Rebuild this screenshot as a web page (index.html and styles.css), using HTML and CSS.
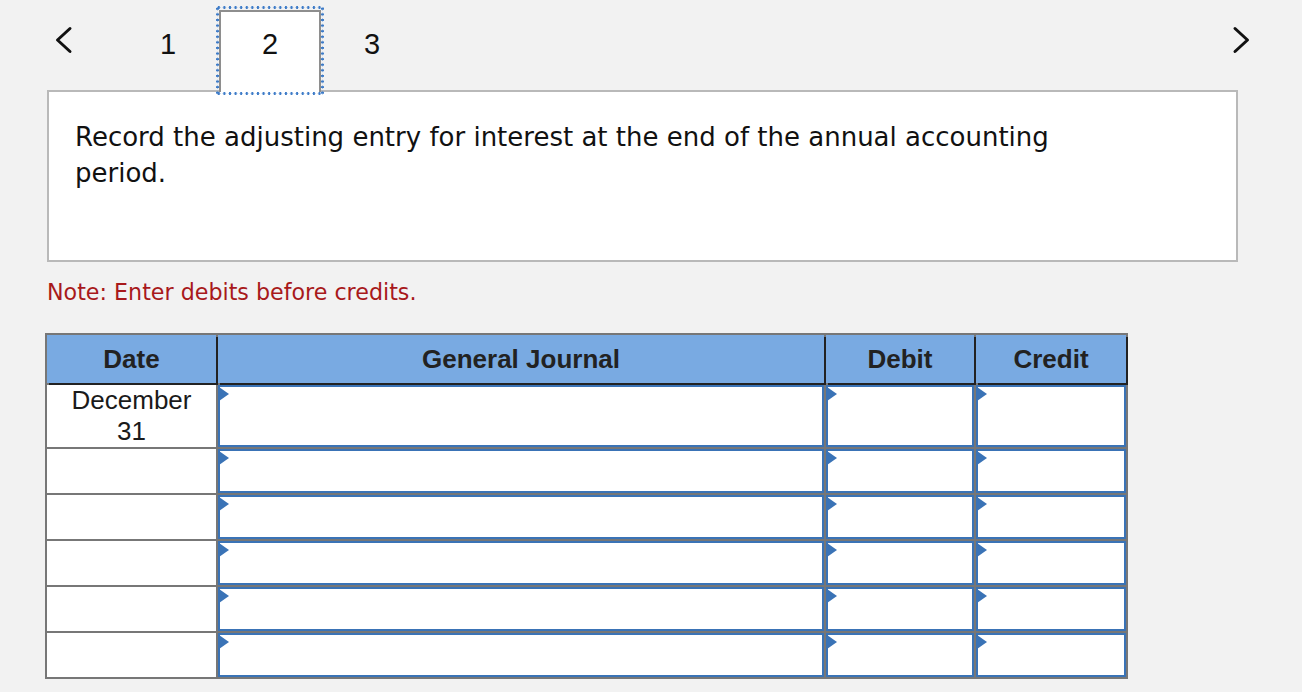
FILE: index.html
```html
<!DOCTYPE html>
<html>
<head>
<meta charset="utf-8">
<link rel="stylesheet" href="styles.css">
</head>
<body>
<div class="nav">
  <svg class="arrow arrow-left" width="20" height="30" viewBox="0 0 20 30"><polyline points="17,3.5 4.5,15 17,26.5" fill="none" stroke="#111" stroke-width="3" stroke-linecap="round" stroke-linejoin="round"/></svg>
  <div class="tabs">
    <div class="tab">1</div>
    <div class="tab active">2</div>
    <div class="tab">3</div>
  </div>
  <svg class="arrow arrow-right" width="20" height="30" viewBox="0 0 20 30"><polyline points="3,3.5 15.5,15 3,26.5" fill="none" stroke="#111" stroke-width="3" stroke-linecap="round" stroke-linejoin="round"/></svg>
</div>

<div class="question">
  <p>Record the adjusting entry for interest at the end of the annual accounting period.</p>
</div>

<p class="note">Note: Enter debits before credits.</p>

<div class="journal">
  <div class="th">Date</div>
  <div class="th">General Journal</div>
  <div class="th">Debit</div>
  <div class="th">Credit</div>

  <div class="td date first">December<br>31</div>
  <div class="td"><div class="input"></div></div>
  <div class="td"><div class="input"></div></div>
  <div class="td"><div class="input"></div></div>

  <div class="td date"></div>
  <div class="td"><div class="input"></div></div>
  <div class="td"><div class="input"></div></div>
  <div class="td"><div class="input"></div></div>

  <div class="td date"></div>
  <div class="td"><div class="input"></div></div>
  <div class="td"><div class="input"></div></div>
  <div class="td"><div class="input"></div></div>

  <div class="td date"></div>
  <div class="td"><div class="input"></div></div>
  <div class="td"><div class="input"></div></div>
  <div class="td"><div class="input"></div></div>

  <div class="td date"></div>
  <div class="td"><div class="input"></div></div>
  <div class="td"><div class="input"></div></div>
  <div class="td"><div class="input"></div></div>

  <div class="td date"></div>
  <div class="td"><div class="input"></div></div>
  <div class="td"><div class="input"></div></div>
  <div class="td"><div class="input"></div></div>
</div>
</body>
</html>
```

FILE: styles.css
```css
html, body {
  margin: 0;
  padding: 0;
}
body {
  background: #f2f2f2;
  font-family: "Liberation Sans", Arial, sans-serif;
  color: #111;
  width: 1302px;
  height: 692px;
  overflow: hidden;
}

.nav {
  display: flex;
  align-items: flex-start;
  padding-top: 10px;
  height: 80px;
}
.arrow {
  display: block;
  margin-top: 15px;
  flex: none;
}
.arrow-left {
  margin-left: 53px;
}
.arrow-right {
  margin-left: auto;
  margin-right: 50px;
}
.tabs {
  display: flex;
  margin-left: 44px;
}
.tab {
  box-sizing: border-box;
  width: 102px;
  height: 82px;
  border: 2px solid transparent;
  border-bottom: none;
  padding-top: 18px;
  text-align: center;
  font-size: 29px;
  line-height: 29px;
  color: #111;
}
.tab.active {
  position: relative;
  z-index: 1;
  background: #fff;
  border-color: #8e8e8e;
}
.tab.active::after {
  content: "";
  position: absolute;
  top: -6px;
  left: -5px;
  right: -5px;
  bottom: -3px;
  pointer-events: none;
  background-image:
    radial-gradient(circle, #3d7bc8 1.1px, rgba(61,123,200,0) 1.6px),
    radial-gradient(circle, #3d7bc8 1.1px, rgba(61,123,200,0) 1.6px),
    radial-gradient(circle, #3d7bc8 1.1px, rgba(61,123,200,0) 1.6px),
    radial-gradient(circle, #3d7bc8 1.1px, rgba(61,123,200,0) 1.6px);
  background-size: 5.6px 3px, 5.6px 3px, 3px 5.6px, 3px 5.6px;
  background-position: left top, left bottom, left top, right top;
  background-repeat: repeat-x, repeat-x, repeat-y, repeat-y;
}

.question {
  box-sizing: border-box;
  height: 172px;
  margin: 0 64px 0 47px;
  background: #fff;
  border: 2px solid #b9b9b9;
  padding: 27px 120px 0 26px;
}
.question p {
  margin: 0;
  font-family: "DejaVu Sans", Verdana, sans-serif;
  font-size: 26px;
  line-height: 36px;
  color: #111;
}

.note {
  margin: 17px 0 0 47px;
  font-family: "DejaVu Sans", Verdana, sans-serif;
  font-size: 22.2px;
  line-height: 26px;
  color: #a8191b;
}

.journal {
  display: grid;
  grid-template-columns: 169px 606px 148px 150px;
  grid-template-rows: 48px 62px 44px 44px 44px 44px 44px;
  gap: 2px;
  padding: 2px;
  margin: 28px 0 0 45px;
  width: 1079px;
  background: #777;
}
.th {
  background: #79aae2;
  box-shadow: 2px 2px 0 #222;
  font-weight: bold;
  font-size: 26px;
  color: #222;
  display: flex;
  align-items: center;
  justify-content: center;
  position: relative;
}
.td {
  background: #fff;
  position: relative;
  display: flex;
}
.td.date {
  display: block;
  text-align: center;
  font-size: 26px;
  line-height: 31px;
  color: #1a1a1a;
}
.input {
  flex: 1;
  box-sizing: border-box;
  border: 2px solid #3a73b6;
  position: relative;
}
.input::before {
  content: "";
  position: absolute;
  left: -1px;
  top: 0;
  width: 0;
  height: 0;
  border-left: 10px solid #3a73b6;
  border-top: 7px solid transparent;
  border-bottom: 7px solid transparent;
}
```
